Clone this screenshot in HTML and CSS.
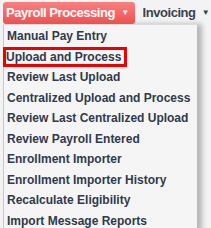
FILE: index.html
```html
<!DOCTYPE html>
<html lang="en">
<head>
    <meta charset="UTF-8">
    <title>Payroll Menu</title>
    <link rel="stylesheet" href="styles.css">
</head>
<body>
    <div class="nav">
        <div class="tab active">Payroll Processing <span class="caret">&#9660;</span></div>
        <div class="tab">Invoicing <span class="caret">&#9660;</span></div>
    </div>

    <!-- Dropdown for Payroll Processing -->
    <ul class="menu">
        <li>Manual Pay Entry</li>
        <li class="selected">Upload and Process</li>
        <li>Review Last Upload</li>
        <li>Centralized Upload and Process</li>
        <li>Review Last Centralized Upload</li>
        <li>Review Payroll Entered</li>
        <li>Enrollment Importer</li>
        <li>Enrollment Importer History</li>
        <li>Recalculate Eligibility</li>
        <li>Import Message Reports</li>
    </ul>
</body>
</html>
```

FILE: styles.css
```css
body {
    font-family: "Liberation Sans", Arial, sans-serif;
    background-color: #f3f3f3;
    margin: 0;
    padding: 2px 0 0 3px;
    font-weight: bold;
    font-size: 13px;
    white-space: nowrap;
}

.nav {
    display: flex;
    align-items: center;
    height: 22px;
}

.tab {
    padding: 0 6px 0 3px;
    line-height: 22px;
    color: #3a4250;
    margin-right: 5px;
    letter-spacing: -0.45px;
}

.tab.active {
    background: linear-gradient(#f98080, #ef5050);
    color: #ffffff;
    border-radius: 3px;
}

.caret {
    font-size: 8px;
    vertical-align: 2px;
    margin-left: 3px;
}

.menu {
    list-style: none;
    margin: 0;
    padding: 1px 0 0;
    width: 193px;
    background-color: #f5f5f5;
    border-left: 1px solid #c8c8c8;
    border-top: 1px solid #dddddd;
    box-shadow: 5px 0 5px rgba(0, 0, 0, 0.25);
    font-size: 12px;
}

.menu li {
    color: #2f3a4c;
    padding: 0 3px;
    line-height: 20.5px;
    height: 20.5px;
}

.menu li.selected {
    border: 3px solid #ee0000;
    line-height: 14.5px;
    height: 14.5px;
    padding: 0;
    width: 118px;
    margin-left: -1px;
}
```
